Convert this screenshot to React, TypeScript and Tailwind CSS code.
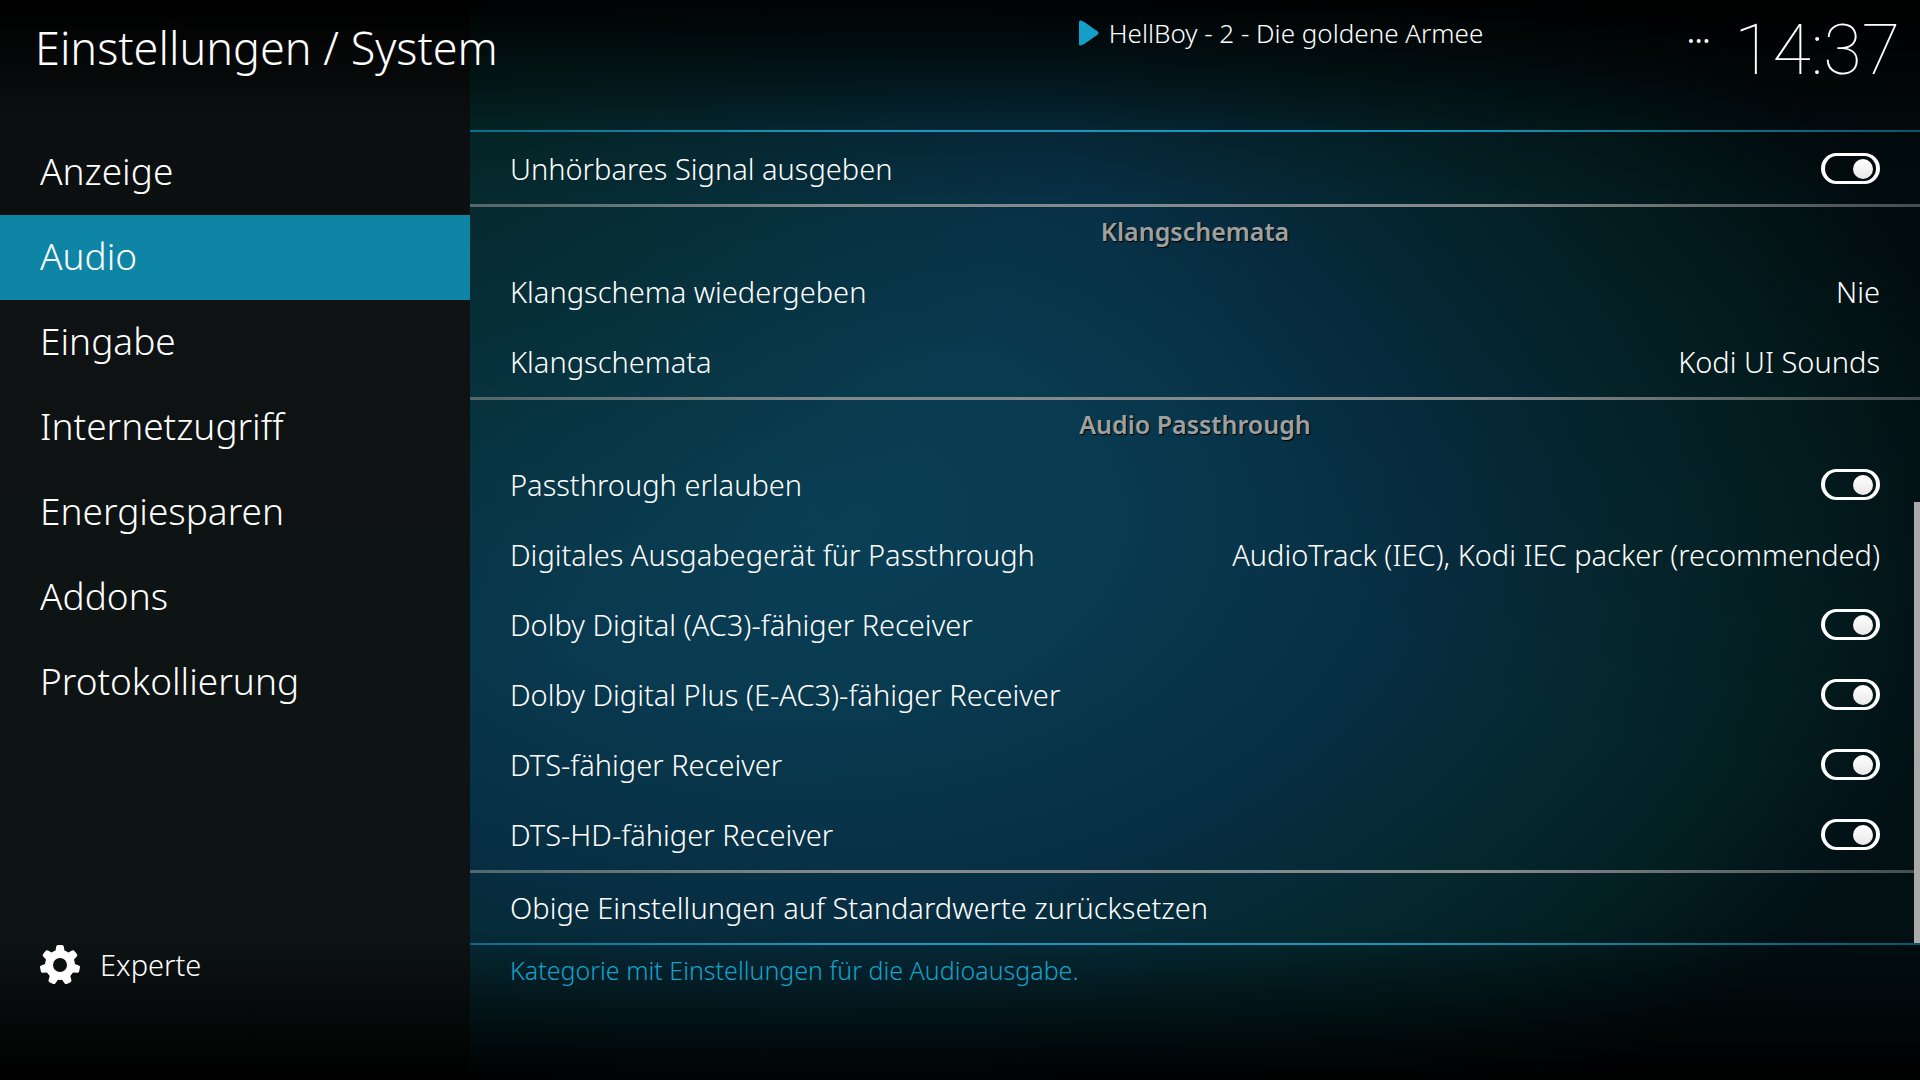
import { useState } from "react";

const categories = [
  "Anzeige",
  "Audio",
  "Eingabe",
  "Internetzugriff",
  "Energiesparen",
  "Addons",
  "Protokollierung",
];

type Setting = { label: string; value?: string };
type Group = { title?: string; settings: Setting[] };

const groups: Group[] = [
  { settings: [{ label: "Unhörbares Signal ausgeben" }] },
  {
    title: "Klangschemata",
    settings: [
      { label: "Klangschema wiedergeben", value: "Nie" },
      { label: "Klangschemata", value: "Kodi UI Sounds" },
    ],
  },
  {
    title: "Audio Passthrough",
    settings: [
      { label: "Passthrough erlauben" },
      {
        label: "Digitales Ausgabegerät für Passthrough",
        value: "AudioTrack (IEC), Kodi IEC packer (recommended)",
      },
      { label: "Dolby Digital (AC3)-fähiger Receiver" },
      { label: "Dolby Digital Plus (E-AC3)-fähiger Receiver" },
      { label: "DTS-fähiger Receiver" },
      { label: "DTS-HD-fähiger Receiver" },
    ],
  },
];

const rowClass =
  "flex h-[70px] w-full cursor-pointer items-center justify-between gap-8 px-10 text-left text-[29px] leading-[40px]";

const AccentLine = () => (
  <div className="h-0.5 bg-[linear-gradient(to_right,#0c6c87,#1399bf_25%,#1399bf_65%,#095768)]" />
);

const Separator = () => (
  <div className="h-[3px] bg-[linear-gradient(to_right,#53666a,#82898b_25%,#868a8c_70%,#444d4f)]" />
);

const SettingRow = ({ label, value }: Setting) => {
  const [on, setOn] = useState(true);

  if (value) {
    return (
      <button type="button" className={rowClass}>
        <span>{label}</span>
        <span>{value}</span>
      </button>
    );
  }

  return (
    <label className={rowClass}>
      <span>{label}</span>
      <input
        type="checkbox"
        role="switch"
        checked={on}
        onChange={() => setOn(!on)}
        className="mb-px flex h-[31px] w-[59px] shrink-0 cursor-pointer appearance-none items-center rounded-full border-x-4 border-y-[3px] border-white px-[3px] before:size-5 before:rounded-full before:bg-linear-to-b before:from-white before:to-[#e8e8e8] checked:justify-end"
      />
    </label>
  );
};

const GearIcon = () => (
  <svg viewBox="0 0 40 40" className="size-10" aria-hidden="true">
    <g fill="#fff">
      {[0, 1, 2, 3, 4, 5, 6].map((i) => (
        <path
          key={i}
          d="M14 9.500Q15.800 7 16.200 1.600Q16.400 0 18 0H22Q23.600 0 23.800 1.600Q24.200 7 26 9.500Z"
          transform={`rotate(${(i * 360) / 7} 20 20)`}
        />
      ))}
    </g>
    <circle cx="20" cy="20" r="11" fill="none" stroke="#fff" strokeWidth="8" />
  </svg>
);

const Sidebar = () => {
  const [active, setActive] = useState("Audio");

  return (
    <aside className="relative z-10 flex w-1/4 max-w-[470px] shrink-0 flex-col bg-[linear-gradient(to_bottom,#000_0,#0c0e0f_120px,#0e1213_300px,#0e1415_calc(100%-150px),#000_100%)]">
      <h1 className="flex h-[130px] items-start pt-[18px] pl-[35px] text-[45px] leading-[60px] whitespace-nowrap">
        Einstellungen / System
      </h1>
      <nav className="flex flex-1 flex-col">
        {categories.map((name) => (
          <button
            key={name}
            type="button"
            onClick={() => setActive(name)}
            className={`h-[85px] pb-1 pl-10 text-left text-[37px] leading-[50px] ${
              name === active ? "bg-[#0f85a5]" : ""
            }`}
          >
            {name}
          </button>
        ))}
      </nav>
      <button
        type="button"
        className="mb-20 flex h-[70px] items-center gap-5 pl-10 text-[29px] leading-[40px]"
      >
        <GearIcon />
        Experte
      </button>
    </aside>
  );
};

const TopBar = () => (
  <header className="flex h-[130px] items-start pr-5 pl-3.5">
    <div className="flex flex-1 items-center gap-2.5 pt-[15px] pl-[42%] text-[26px] leading-[36px]">
      <svg viewBox="0 0 20 26" className="h-[26px] w-5" aria-hidden="true">
        <path d="M0 2Q0 0 2 .6L6 2.5 18.8 11.4Q20.4 13 18.8 14.6L6 23.500 2 25.400Q0 26 0 24Z" fill="#149fc8" />
      </svg>
      <span>HellBoy - 2 - Die goldene Armee</span>
    </div>
    <span className="pt-3.5 pr-6 text-[29px] leading-[36px] font-normal">...</span>
    <time className="pt-2 font-[Roboto] text-[70px] leading-[84px] font-thin">
      14:37
    </time>
  </header>
);

export default function App() {
  return (
    <div className="flex min-h-screen bg-[linear-gradient(to_bottom,rgba(0,0,0,.95)_0,rgba(0,0,0,.55)_70px,rgba(0,0,0,.15)_130px,transparent_200px,transparent_calc(100%-150px),rgba(0,0,0,.95)_100%),radial-gradient(ellipse_45%_75%_at_100%_0%,rgba(0,0,0,.35),transparent),radial-gradient(ellipse_30%_50%_at_24%_12%,rgba(4,40,34,.7),transparent),radial-gradient(ellipse_62%_70%_at_42%_48%,#0a4056_0%,#093a50_25%,#072e42_52%,#05282f_70%,#031f22_85%,#020f13_100%)] font-['Noto_Sans',sans-serif] font-light text-white">
      <Sidebar />
      <main className="flex min-w-0 flex-1 flex-col">
        <TopBar />
        <AccentLine />
        <div className="relative pt-0.5">
          {groups.map((group, i) => (
            <section key={i}>
              {group.title && (
                <h2 className="h-[50px] text-center text-[25px] leading-[48px] font-semibold text-[#a0a0a0] [text-shadow:1px_1px_1px_#000]">
                  {group.title}
                </h2>
              )}
              {group.settings.map((s) => (
                <SettingRow key={s.label} {...s} />
              ))}
              <Separator />
            </section>
          ))}
          <button type="button" className={rowClass}>
            Obige Einstellungen auf Standardwerte zurücksetzen
          </button>
          <div className="absolute right-0 bottom-0 h-[441px] w-1.5 bg-[#aaa]" />
        </div>
        <AccentLine />
        <p className="px-10 pt-2 text-[25px] leading-[34px] text-[#17a2ca]">
          Kategorie mit Einstellungen für die Audioausgabe.
        </p>
      </main>
    </div>
  );
}
